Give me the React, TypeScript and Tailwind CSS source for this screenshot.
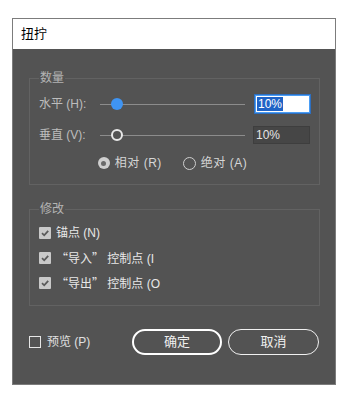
const font = { fontFamily: '"Liberation Sans", "Noto Sans CJK SC", sans-serif' };
const cjk = { fontFamily: '"Noto Sans CJK SC", sans-serif' };

function SliderRow({ label, value, active }: { label: string; value: string; active?: boolean }) {
  return (
    <div className="flex h-[18px] items-center">
      <span className="w-[58px] text-[12px] leading-none text-[#bdbdbd] whitespace-nowrap">{label}</span>
      <div className="relative ml-[3px] h-[14px] w-[145px]">
        <div className="absolute left-0 right-0 top-[7px] h-px bg-[#8c8c8c]" />
        {active ? (
          <div className="absolute left-[11px] top-[1px] h-[12px] w-[12px] rounded-full bg-[#3f94f2]" />
        ) : (
          <div className="absolute left-[11px] top-[1px] h-[12px] w-[12px] rounded-full border-2 border-[#e8e8e8] bg-[#535353]" />
        )}
      </div>
      {active ? (
        <div className="ml-[10px] flex h-[18px] w-[55px] items-center border border-[#4a9df5] bg-white pl-[1px] shadow-[0_0_0_1px_#2d6fc0]">
          <span className="bg-[#1f63c6] px-[1px] text-[12px] leading-[14px] text-white">{value}</span>
        </div>
      ) : (
        <div className="ml-[8px] flex h-[18px] w-[57px] items-center border border-[#3e3e3e] bg-[#464646] pl-[2px]">
          <span className="text-[12px] leading-[14px] text-[#e4e4e4]">{value}</span>
        </div>
      )}
    </div>
  );
}

function CheckRow({ children }: { children: React.ReactNode }) {
  return (
    <div className="flex h-[16px] items-center gap-[5px]">
      <div className="flex h-[12px] w-[12px] items-center justify-center rounded-[1px] bg-[#c9c9c9]">
        <svg width="10" height="10" viewBox="0 0 10 10">
          <path d="M2 5.2 L4.2 7.3 L8.2 2.8" fill="none" stroke="#5a5a5a" strokeWidth="1.8" />
        </svg>
      </div>
      <span className="text-[12px] leading-none text-[#e8e8e8] whitespace-nowrap">{children}</span>
    </div>
  );
}

export default function App() {
  return (
    <div className="h-[400px] w-[352px] bg-white pl-[12px] pt-[18px]" style={font}>
      <div className="w-[324px] border border-[#7c7c7c]">
        <div className="flex h-[30px] items-center bg-white pl-[8px] text-[13px] text-black">扭拧</div>
        <div className="h-[335px] bg-[#535353] px-[16px] pt-[21px]">
          <fieldset className="w-[291px] border border-[#626262] pb-[13px] pl-[9px] pr-[9px]">
            <legend className="px-[1px] text-[12px] leading-[16px] text-[#b4b4b4]">数量</legend>
            <div className="mt-[9px] flex flex-col gap-[13px]">
              <SliderRow label="水平 (H):" value="10%" active />
              <SliderRow label="垂直 (V):" value="10%" />
            </div>
            <div className="mt-[11px] flex h-[16px] items-center justify-center gap-[5px] pr-[4px] text-[12px] leading-none text-[#d6d6d6]">
              <div className="flex h-[12px] w-[12px] items-center justify-center rounded-full bg-[#cfcfcf]">
                <div className="h-[5px] w-[5px] rounded-full bg-[#6a6a6a]" />
              </div>
              <span className="tracking-[0.5px]">相对 (R)</span>
              <div className="ml-[16px] h-[13px] w-[13px] rounded-full border border-[#cfcfcf]" />
              <span className="tracking-[0.5px]">绝对 (A)</span>
            </div>
          </fieldset>

          <fieldset className="mt-[16px] w-[291px] border border-[#626262] pb-[14px] pl-[9px]">
            <legend className="px-[1px] text-[12px] leading-[16px] text-[#b4b4b4]">修改</legend>
            <div className="mt-[8px] flex flex-col gap-[9px]">
              <CheckRow>锚点 (N)</CheckRow>
              <CheckRow>
                <span style={cjk}>“导入”</span> 控制点 (I
              </CheckRow>
              <CheckRow>
                <span style={cjk}>“导出”</span> 控制点 (O
              </CheckRow>
            </div>
          </fieldset>

          <div className="mt-[23px] flex items-center">
            <div className="flex w-[103px] shrink-0 items-center gap-[6px]">
              <div className="h-[12px] w-[12px] border border-[#e6e6e6]" />
              <span className="text-[12px] whitespace-nowrap text-[#e0e0e0]">预览 (P)</span>
            </div>
            <button className="h-[26px] w-[90px] rounded-full border-2 border-white text-[13px] text-[#f0f0f0]">确定</button>
            <button className="ml-[6px] h-[26px] w-[91px] rounded-full border-[1.5px] border-[#f0f0f0] text-[13px] text-[#f0f0f0]">取消</button>
          </div>
        </div>
      </div>
    </div>
  );
}
